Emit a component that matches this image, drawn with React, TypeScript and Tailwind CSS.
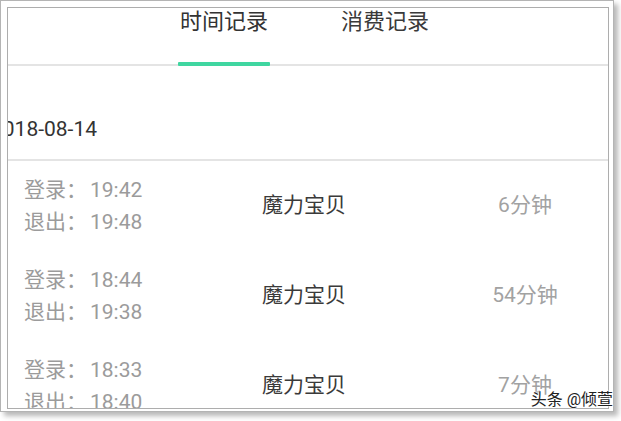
const rows = [
  { login: '19:42', logout: '19:48', name: '魔力宝贝', dur: '6分钟' },
  { login: '18:44', logout: '19:38', name: '魔力宝贝', dur: '54分钟' },
  { login: '18:33', logout: '18:40', name: '魔力宝贝', dur: '7分钟' },
];

export default function App() {
  return (
    <div className="h-[421px] w-[621px] bg-white font-['Roboto','Noto_Sans_CJK_SC',sans-serif]">
      <div className="relative h-[412px] w-[614px] border border-[#b4b4b4] bg-white p-[6px] shadow-[4px_4px_5px_rgba(0,0,0,0.28)]">
        <div className="h-[400px] w-[600px] overflow-hidden border border-[#adadad] bg-white box-content">
          {/* tabs */}
          <div className="flex h-[58px] border-b-2 border-[#e4e4e4] pl-[170px]">
            <div className="flex w-[92px] flex-col items-center justify-between">
              <span className="text-[22px] leading-[28px] text-[#333]">时间记录</span>
              <span className="-mb-[2px] h-[4px] w-full rounded-[1px] bg-[#3fd6a0]" />
            </div>
            <div className="ml-[69px] flex w-[92px] flex-col items-center">
              <span className="text-[22px] leading-[28px] text-[#3a3a3a]">消费记录</span>
            </div>
          </div>

          {/* date */}
          <div className="flex h-[95px] items-center border-b-2 border-[#e4e4e4] pt-[32px]">
            <span className="-ml-[17px] text-[21px] leading-[28px] text-[#333]">2018-08-14</span>
          </div>

          {/* records */}
          {rows.map((r, i) => (
            <div key={i} className="flex h-[90px] items-center">
              <div className="w-[196px] pl-[16px] text-[21px] leading-[32px] text-[#9b9b9b]">
                <div>登录：<span className="ml-[3px]">{r.login}</span></div>
                <div>退出：<span className="ml-[3px]">{r.logout}</span></div>
              </div>
              <div className="w-[200px] text-center text-[21px] text-[#3a3a3a]">{r.name}</div>
              <div className="flex-1 pl-[38px] text-center text-[21px] text-[#a2a2a2]">{r.dur}</div>
            </div>
          ))}
        </div>

        <span className="absolute bottom-[1px] right-[0px] text-[16px] leading-[20px] text-[#222] [text-shadow:0_0_2px_#fff,0_0_2px_#fff,0_0_2px_#fff]">
          头条 @倾萱
        </span>
      </div>
    </div>
  );
}
